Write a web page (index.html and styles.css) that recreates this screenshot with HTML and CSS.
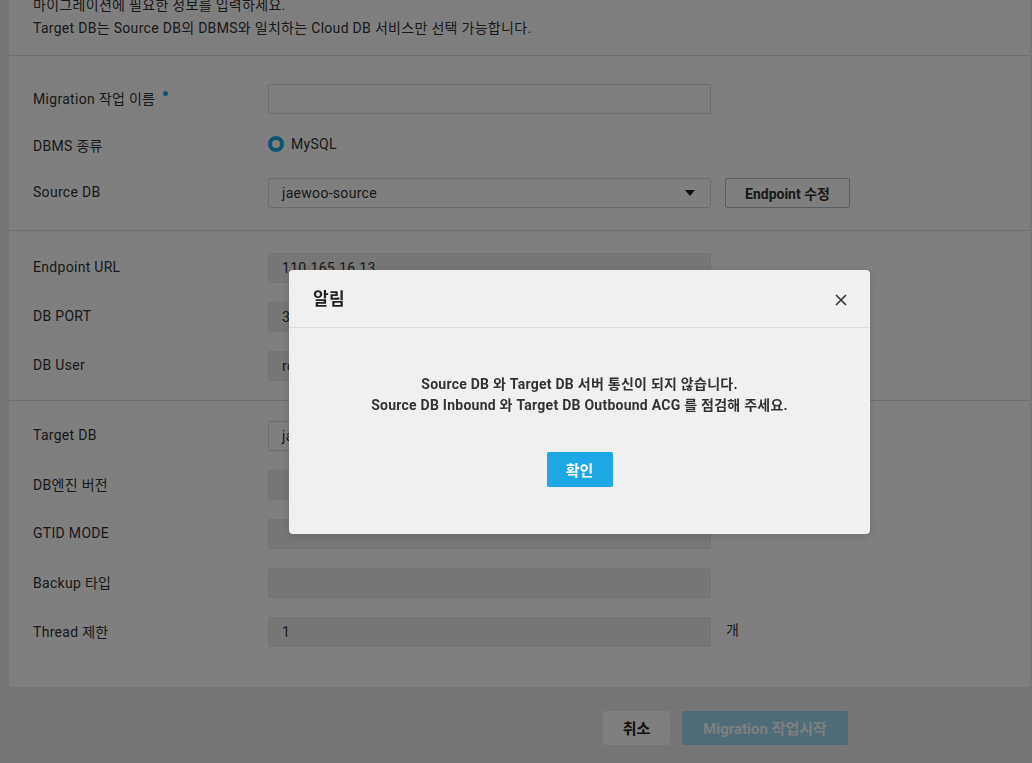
FILE: index.html
```html
<!DOCTYPE html>
<html lang="ko">
<head>
    <meta charset="UTF-8">
    <meta name="viewport" content="width=device-width, initial-scale=1.0">
    <title>Migration 작업 생성</title>
    <link rel="stylesheet" href="styles.css">
</head>
<body>

<div class="page">
    <div class="panel">
        <div class="guide">
            <p>마이그레이션에 필요한 정보를 입력하세요.</p>
            <p>Target DB는 Source DB의 DBMS와 일치하는 Cloud DB 서비스만 선택 가능합니다.</p>
        </div>

        <div class="section first">
            <div class="row">
                <label class="label">Migration 작업 이름 <span class="required"></span></label>
                <input class="field" type="text">
            </div>
            <div class="row">
                <label class="label">DBMS 종류</label>
                <div class="radio-group">
                    <span class="radio"></span>
                    <span>MySQL</span>
                </div>
            </div>
            <div class="row">
                <label class="label">Source DB</label>
                <div class="field select">
                    <span>jaewoo-source</span>
                    <svg class="caret" width="10" height="6" viewBox="0 0 10 6"><path d="M0 0h10L5 6z" fill="#222"/></svg>
                </div>
                <button class="btn-endpoint">Endpoint 수정</button>
            </div>
        </div>

        <div class="section second">
            <div class="row">
                <label class="label">Endpoint URL</label>
                <div class="field disabled">110.165.16.13</div>
            </div>
            <div class="row">
                <label class="label">DB PORT</label>
                <div class="field disabled">3306</div>
            </div>
            <div class="row">
                <label class="label">DB User</label>
                <div class="field disabled">root</div>
            </div>
        </div>

        <div class="section third">
            <div class="row">
                <label class="label">Target DB</label>
                <div class="field select">
                    <span>jaewoo-target</span>
                    <svg class="caret" width="10" height="6" viewBox="0 0 10 6"><path d="M0 0h10L5 6z" fill="#222"/></svg>
                </div>
            </div>
            <div class="row">
                <label class="label">DB엔진 버전</label>
                <div class="field disabled"></div>
            </div>
            <div class="row">
                <label class="label">GTID MODE</label>
                <div class="field disabled"></div>
            </div>
            <div class="row">
                <label class="label">Backup 타입</label>
                <div class="field disabled"></div>
            </div>
            <div class="row">
                <label class="label">Thread 제한</label>
                <div class="field disabled">1</div>
                <span class="unit">개</span>
            </div>
        </div>
    </div>

    <div class="footer">
        <button class="btn-cancel">취소</button>
        <button class="btn-start" disabled>Migration 작업시작</button>
    </div>
</div>

<div class="dim"></div>

<div class="modal">
    <div class="modal-header">
        <h2>알림</h2>
        <svg class="close" width="12" height="12" viewBox="0 0 12 12"><path d="M1 1l10 10M11 1L1 11" stroke="#333" stroke-width="1.6"/></svg>
    </div>
    <div class="modal-body">
        <p>Source DB 와 Target DB 서버 통신이 되지 않습니다.<br>Source DB Inbound 와 Target DB Outbound ACG 를 점검해 주세요.</p>
        <button class="btn-ok">확인</button>
    </div>
</div>

</body>
</html>
```

FILE: styles.css
```css
/* Base */
* {
    box-sizing: border-box;
}
body {
    margin: 0;
    font-family: Roboto, 'Noto Sans CJK KR', sans-serif;
    font-size: 14px;
    letter-spacing: 0.3px;
    color: #333;
    background: #ececec;
    height: 763px;
    overflow: hidden;
}
.page {
    padding: 0 2px 0 9px;
}

/* Panel */
.panel {
    background: #fff;
    margin-top: -10px;
}
.guide {
    padding: 4px 24px 15px;
    line-height: 23px;
}
.guide p {
    margin: 0;
}
.section {
    border-top: 1px solid #dcdcdc;
    padding: 0 24px;
    display: flex;
    flex-direction: column;
    gap: 19px;
}
.section.first {
    padding-top: 28px;
    padding-bottom: 22px;
    gap: 17px;
}
.section.second {
    padding-top: 22px;
    padding-bottom: 19px;
}
.section.third {
    padding-top: 20px;
    padding-bottom: 40px;
}
.row {
    display: flex;
    align-items: center;
    height: 30px;
}
.label {
    width: 235px;
    flex-shrink: 0;
    margin-top: -3px;
}
.required {
    display: inline-block;
    width: 5px;
    height: 5px;
    border-radius: 50%;
    background: #1a9fe0;
    vertical-align: 8px;
    margin-left: 4px;
}
.field {
    width: 443px;
    height: 30px;
    border: 1px solid #dadada;
    border-radius: 2px;
    background: #fff;
    padding: 0 13px;
    font: inherit;
    color: #333;
    display: flex;
    align-items: center;
}
.field.disabled {
    background: #efefef;
    border-color: #e6e6e6;
}
.select {
    justify-content: space-between;
}
.caret {
    margin-right: 2px;
}
.radio-group {
    display: flex;
    align-items: center;
    gap: 7px;
    margin-top: -4px;
}
.radio {
    width: 16px;
    height: 16px;
    border-radius: 50%;
    border: 4px solid #21a6e3;
    background: #fff;
}
.btn-endpoint {
    margin-left: 14px;
    width: 125px;
    height: 30px;
    border: 1px solid #a9bed0;
    border-radius: 2px;
    background: #fff;
    font: inherit;
    font-weight: 700;
    color: #333;
}
.unit {
    margin-left: 15px;
    margin-top: -6px;
}

/* Footer */
.footer {
    display: flex;
    justify-content: flex-end;
    gap: 12px;
    padding: 24px 182px 0 0;
}
.footer button {
    height: 34px;
    border: none;
    border-radius: 2px;
    font-family: inherit;
    font-size: 15px;
    font-weight: 700;
}
.btn-cancel {
    width: 67px;
    background: #fff;
    color: #222;
    padding-bottom: 3px;
}
.btn-start {
    width: 166px;
    background: #9ed6ee;
    color: #fff;
    padding-bottom: 3px;
}

/* Modal */
.dim {
    position: fixed;
    inset: 0;
    background: rgba(0, 0, 0, 0.5);
}
.modal {
    position: fixed;
    left: 289px;
    top: 270px;
    width: 581px;
    height: 264px;
    background: #f0f0f0;
    border-radius: 4px;
    box-shadow: 0 2px 8px rgba(0, 0, 0, 0.15);
}
.modal-header {
    height: 58px;
    border-bottom: 1px solid #dedede;
    display: flex;
    align-items: center;
    justify-content: space-between;
    padding: 0 23px 0 24px;
}
.modal-header h2 {
    margin: 0 0 3px;
    font-size: 17px;
    font-weight: 700;
    color: #222;
}
.close {
    margin-top: 2px;
}
.modal-body {
    text-align: center;
    padding-top: 46px;
}
.modal-body p {
    margin: 0 0 36px;
    font-size: 14px;
    font-weight: 700;
    letter-spacing: 0.25px;
    line-height: 21px;
    color: #333;
}
.btn-ok {
    width: 66px;
    height: 35px;
    border: none;
    border-radius: 2px;
    background: #1ba8e4;
    color: #fff;
    font-family: inherit;
    font-size: 15px;
    font-weight: 700;
}
```
